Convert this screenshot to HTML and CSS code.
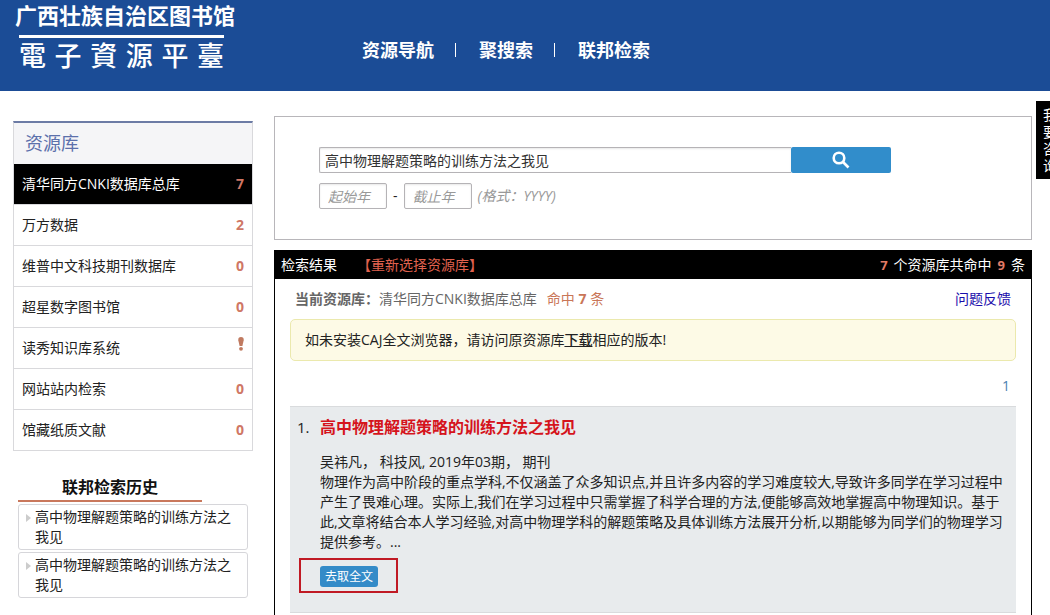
FILE: index.html
```html
<!DOCTYPE html>
<html lang="zh-CN">
<head>
<meta charset="utf-8">
<meta name="viewport" content="width=device-width, initial-scale=1">
<title>电子资源平台</title>
<link rel="stylesheet" href="styles.css">
</head>
<body>
<header class="site-header">
  <div class="brand">
    <div class="brand-name">广西壮族自治区图书馆</div>
    <div class="brand-platform" lang="zh-TW">電子資源平臺</div>
  </div>
  <nav class="main-nav">
    <a href="#">资源导航</a>
    <a href="#">聚搜索</a>
    <a href="#">联邦检索</a>
  </nav>
</header>

<div class="page">
  <aside class="sidebar">
    <section class="databases">
      <h2 class="databases-title">资源库</h2>
      <ul class="database-list">
        <li><a class="database active" href="#"><span>清华同方CNKI数据库总库</span><b class="count">7</b></a></li>
        <li><a class="database" href="#"><span>万方数据</span><b class="count">2</b></a></li>
        <li><a class="database" href="#"><span>维普中文科技期刊数据库</span><b class="count">0</b></a></li>
        <li><a class="database" href="#"><span>超星数字图书馆</span><b class="count">0</b></a></li>
        <li><a class="database" href="#"><span>读秀知识库系统</span><svg class="alert-icon" viewBox="0 0 6 14" role="img" aria-label="错误"><path d="M3 0C4.800 0 6 1 5.700 3.200L4.400 9H1.600L.3 3.200C0 1 1.200 0 3 0Z"/><circle cx="3" cy="11.800" r="1.900"/></svg></a></li>
        <li><a class="database" href="#"><span>网站站内检索</span><b class="count">0</b></a></li>
        <li><a class="database" href="#"><span>馆藏纸质文献</span><b class="count">0</b></a></li>
      </ul>
    </section>
    <section class="history">
      <h2 class="history-title">联邦检索历史</h2>
      <ul class="history-list">
        <li><a class="history-item" href="#">高中物理解题策略的训练方法之我见</a></li>
        <li><a class="history-item" href="#">高中物理解题策略的训练方法之我见</a></li>
      </ul>
    </section>
  </aside>

  <main class="content">
    <form class="search-panel">
      <div class="search-row">
        <input class="search-input" type="text" value="高中物理解题策略的训练方法之我见" aria-label="检索词">
        <button class="search-button" type="submit" aria-label="检索">
          <svg class="search-icon" viewBox="0 0 18 18"><circle cx="7" cy="7" r="5.300"/><path d="M11 11L16.500 16.500"/></svg>
        </button>
      </div>
      <div class="year-row">
        <input class="year-input" type="text" placeholder="起始年" aria-label="起始年">
        <span>-</span>
        <input class="year-input" type="text" placeholder="截止年" aria-label="截止年">
        <em class="year-hint">(格式：YYYY)</em>
      </div>
    </form>

    <section class="results">
      <div class="results-bar">
        <h2 class="results-title">检索结果</h2>
        <a class="reselect" href="#">【重新选择资源库】</a>
        <p class="results-total"><b>7</b><span>个资源库共命中</span><b>9</b><span>条</span></p>
      </div>
      <div class="results-body">
        <div class="current">
          <p><strong>当前资源库：</strong>清华同方CNKI数据库总库</p>
          <p class="hits">命中 <b>7</b> 条</p>
          <a class="feedback" href="#">问题反馈</a>
        </div>
        <p class="notice">如未安装CAJ全文浏览器，请访问原资源库<a href="#">下载</a>相应的版本!</p>
        <nav class="pager"><a href="#">1</a></nav>
        <article class="result">
          <span class="result-number">1.</span>
          <div class="result-main">
            <h3 class="result-title"><a href="#">高中物理解题策略的训练方法之我见</a></h3>
            <p>吴祎凡， 科技风, 2019年03期， 期刊</p>
            <p>物理作为高中阶段的重点学科,不仅涵盖了众多知识点,并且许多内容的学习难度较大,导致许多同学在学习过程中产生了畏难心理。实际上,我们在学习过程中只需掌握了科学合理的方法,便能够高效地掌握高中物理知识。基于此,文章将结合本人学习经验,对高中物理学科的解题策略及具体训练方法展开分析,以期能够为同学们的物理学习提供参考。...</p>
            <div class="fulltext-frame"><button class="fulltext" type="button">去取全文</button></div>
          </div>
        </article>
      </div>
    </section>
  </main>
</div>
<a class="consult" href="#">我要咨询</a>
</body>
</html>
```
FILE: styles.css
```css
* { box-sizing: border-box; }

body {
  margin: 0;
  min-height: 100vh;
  display: flex;
  flex-direction: column;
  position: relative;
  overflow-x: hidden;
  background: #fff;
  color: #222;
  font: 14px/20px "Open Sans", "Noto Sans CJK SC", sans-serif;
}

h2, h3, p, ul { margin: 0; padding: 0; }
ul { list-style: none; }
a { color: inherit; text-decoration: none; }
input, button { font: inherit; }

/* Header */
.site-header {
  display: flex;
  align-items: flex-start;
  gap: 127px;
  height: 91px;
  padding: 0 15px;
  background: #1b4c96;
  color: #fff;
}

.brand-name {
  padding-bottom: 4px;
  font-size: 22px;
  font-weight: 700;
  line-height: 31px;
}

.brand-platform {
  width: 205px;
  margin-left: 4px;
  border-top: 3px solid #fff;
  font-family: "Noto Sans CJK TC", sans-serif;
  font-size: 27px;
  font-weight: 500;
  line-height: 34px;
  text-align-last: justify;
}

.main-nav {
  display: flex;
  padding-top: 40px;
  font-size: 18px;
  font-weight: 700;
}

.main-nav a + a {
  display: flex;
  align-items: center;
  margin-left: 21px;
}

.main-nav a + a::before {
  content: "";
  height: 14px;
  margin-right: 23px;
  border-left: 1px solid #fff;
}

/* Page columns */
.page {
  flex: 1;
  display: flex;
  gap: 21px;
  padding: 25px 18px 0 13px;
}

.sidebar {
  flex: 0 0 240px;
  padding-top: 5px;
}

.databases {
  border: 1px solid #d9d9dc;
  border-top: 2px solid #6c7ba5;
}

.databases-title {
  padding: 0 11px;
  background: #f5f5f7;
  color: #5c70ab;
  font-size: 18px;
  font-weight: 400;
  line-height: 41px;
}

.database {
  display: flex;
  align-items: center;
  justify-content: space-between;
  height: 41px;
  padding: 0 8px;
  border-bottom: 1px solid #d9d9dc;
}

.database-list li:last-child .database {
  height: 40px;
  border-bottom: 0;
}

.database.active {
  background: #000;
  color: #fff;
}

.count { color: #cf7765; }

.alert-icon {
  width: 6px;
  height: 14px;
  margin-bottom: 8px;
  fill: #c07a60;
}

.history { padding: 24px 5px 0; }

.history-title {
  width: 184px;
  margin-bottom: 2px;
  border-bottom: 2px solid #c9785c;
  color: #111;
  font-size: 16px;
  line-height: 25px;
  text-align: center;
}

.history-list {
  display: grid;
  gap: 2px;
}

.history-item {
  display: block;
  position: relative;
  padding: 2px 12px 2px 16px;
  border: 1px solid #d6d6da;
  border-radius: 3px;
}

.history-item::before {
  content: "";
  position: absolute;
  left: 7px;
  top: 9px;
  border: 4px solid transparent;
  border-left: 5px solid #ccc;
  border-right: 0;
}

/* Search form */
.content {
  flex: 1;
  min-width: 0;
  display: flex;
  flex-direction: column;
  gap: 10px;
}

.search-panel {
  display: grid;
  gap: 10px;
  padding: 30px 140px 30px 44px;
  border: 1px solid #b8b6ba;
}

.search-row { display: flex; }

.search-input,
.year-input {
  height: 26px;
  padding: 0 5px;
  border: 1px solid #b5b3b6;
  border-radius: 2px;
  background: #fff;
  box-shadow: inset 0 1px 2px #e8e8e8;
  color: #333;
}

.search-input {
  flex: 1;
  min-width: 0;
  border-right: 0;
  border-radius: 2px 0 0 2px;
}

.search-button {
  width: 100px;
  height: 26px;
  display: flex;
  align-items: center;
  justify-content: center;
  padding: 0;
  border: 0;
  border-radius: 2px;
  background: #318dcb;
}

.search-icon {
  width: 18px;
  height: 18px;
  fill: none;
  stroke: #fff;
  stroke-width: 2.600;
}

.year-row {
  display: flex;
  align-items: center;
  gap: 6px;
  height: 26px;
}

.year-input {
  width: 68px;
  padding: 0 8px;
}

.year-input::placeholder {
  color: #999;
  font-style: italic;
}

.year-hint { color: #999; }

/* Results */
.results {
  flex: 1;
  display: flex;
  flex-direction: column;
}

.results-bar {
  display: flex;
  align-items: center;
  height: 29px;
  padding: 0 7px;
  background: #000;
  color: #fff;
}

.results-title {
  font-size: 14px;
  font-weight: 400;
}

.reselect {
  margin-left: 20px;
  color: #e0624f;
}

.results-total {
  display: flex;
  gap: 6px;
  margin-left: auto;
}

.results-total b {
  color: #e27b66;
  font-size: 13px;
}

.results-body {
  flex: 1;
  padding: 10px 15px 2px;
  border: 1px solid #000;
  border-width: 0 1px;
}

.current {
  display: flex;
  gap: 10px;
  padding: 0 5px;
  color: #666;
}

.hits { color: #c97658; }

.feedback {
  margin-left: auto;
  color: #1a0dab;
}

.notice {
  margin-top: 10px;
  padding: 10px 14px;
  border: 1px solid #ebe9ad;
  border-radius: 5px;
  background: #fdfae6;
}

.notice a {
  font-weight: 500;
  text-decoration: underline;
}

.pager {
  padding: 15px 6px 10px;
  color: #4a7fb0;
  text-align: right;
}

.result {
  display: flex;
  padding: 10px 13px 19px 7px;
  border: 1px solid #d9dbdd;
  border-width: 1px 0;
  background: #e8ebed;
}

.result-number {
  flex: 0 0 23px;
  font-size: 15px;
}

.result-main {
  flex: 1;
  min-width: 0;
}

.result-title {
  margin-bottom: 15px;
  color: #d5141c;
  font-size: 16px;
  line-height: 20px;
}

.fulltext-frame {
  width: 99px;
  margin: 6px 0 0 -21px;
  padding: 6px 19px 4px;
  border: 2px solid #c01a24;
}

.fulltext {
  display: block;
  width: 58px;
  height: 21px;
  padding: 0;
  border: 0;
  border-radius: 3px;
  background: #348bc8;
  color: #fff;
  font-size: 12px;
  line-height: 21px;
}

/* Consultation tab on the window edge */
.consult {
  position: absolute;
  top: 101px;
  left: calc(100% - 14px);
  width: 28px;
  padding: 5px 7px;
  background: #000;
  color: #fff;
  line-height: 17px;
}
```
